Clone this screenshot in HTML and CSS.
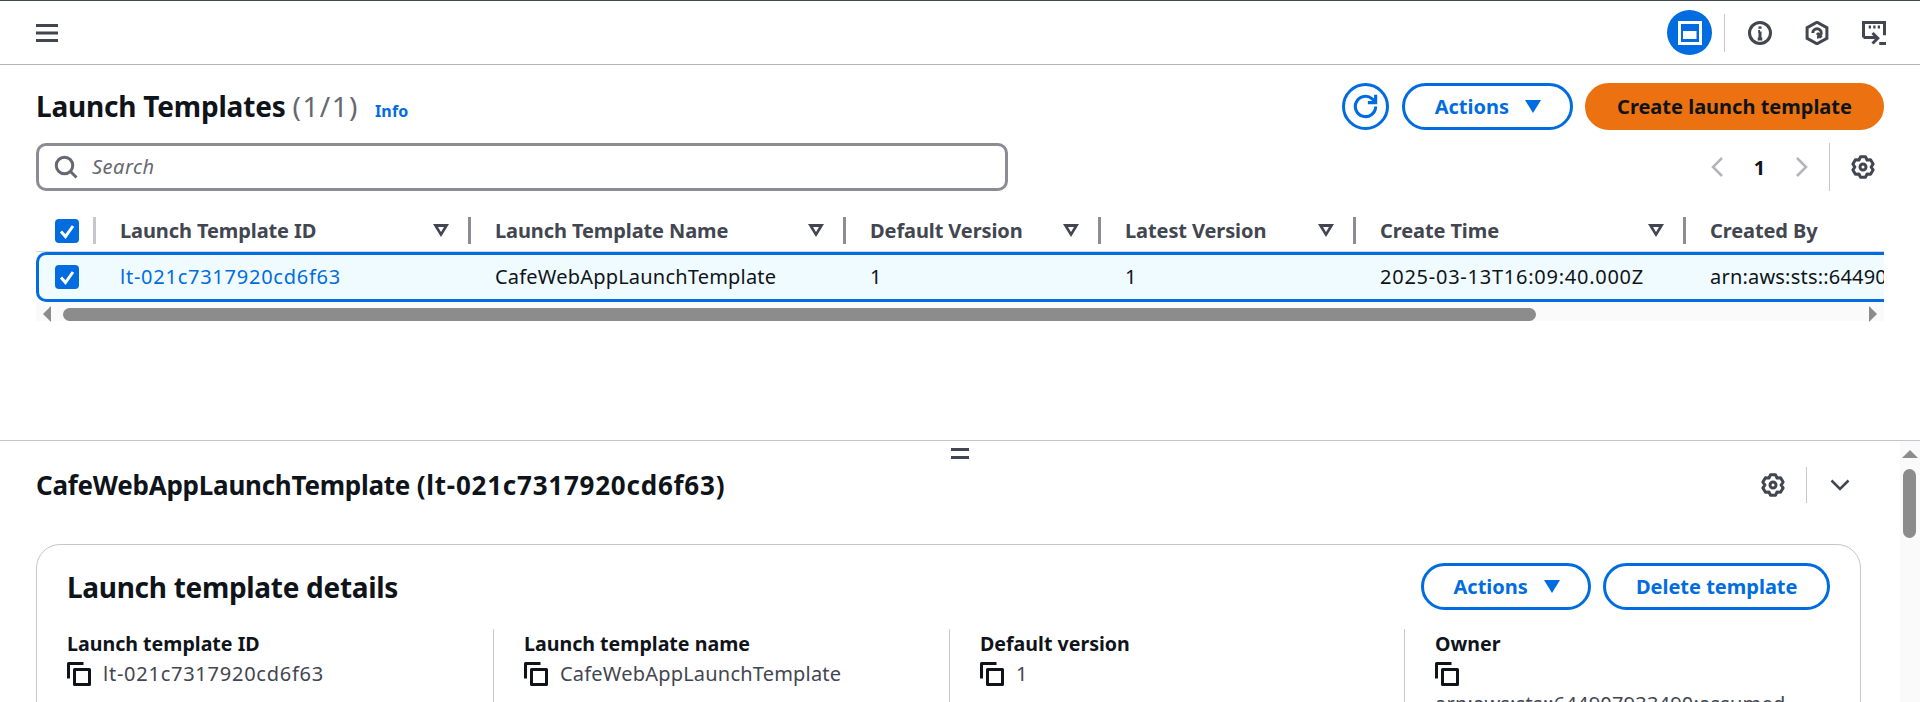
FILE: index.html
```html
<!DOCTYPE html>
<html>
<head>
	<title>Launch Templates</title>
	<link rel="stylesheet" href="styles.css">
</head>
<body>
<svg class="defs" width="0" height="0">
	<symbol id="gear" viewBox="0 0 16 16"><path d="M6.31 1.21L9.69 1.21L10.7 3.32L13.03 3.13L14.73 6.07L13.4 8L14.73 9.93L13.03 12.87L10.7 12.68L9.69 14.79L6.31 14.79L5.3 12.68L2.97 12.87L1.27 9.93L2.6 8L1.27 6.07L2.97 3.13L5.3 3.32Z"/><circle cx="8" cy="8" r="2"/></symbol>
	<symbol id="copy" viewBox="0 0 16 16"><path d="M1 11V1h10"/><rect x="5" y="5" width="10" height="10"/></symbol>
	<symbol id="check" viewBox="0 0 24 24"><path d="M6 12.5l4.5 5L18 7"/></symbol>
</svg>

<header class="topbar">
	<svg class="ico menu" viewBox="0 0 22 18"><path d="M0 1.5h22M0 9h22M0 16.5h22"/></svg>
	<div class="tools">
		<span class="tool-on"><svg viewBox="0 0 24 24"><rect x="1.5" y="1.5" width="21" height="21"/><rect class="fill" x="5" y="10" width="13.5" height="8"/></svg></span>
		<span class="tool-sep"></span>
		<svg class="ico tool" viewBox="0 0 16 16"><circle cx="8" cy="8" r="7"/><path d="M8 7v5M6.5 12h3M6.8 7H8"/><path d="M8 3.6v1.6"/></svg>
		<svg class="ico tool" viewBox="0 0 16 16"><path d="M8 .8l6.6 3.7v7L8 15.2l-6.6-3.7v-7z"/><path d="M5.2 8A2.8 2.8 0 1 1 8 10.8M8 8l3 3"/></svg>
		<svg class="ico tool" viewBox="0 0 16 16"><path d="M1 11V1h14v8.5"/><path d="M4.5 4h1.5M7.5 4h1.5M10.5 4h1.5M1 11h9M7 8l3.5 3.5L7 15M11.5 15H16"/></svg>
	</div>
</header>

<main class="upper">
	<div class="title-row">
		<h1>Launch Templates <span class="count">(1/1)</span> <a class="info">Info</a></h1>
		<div class="actions">
			<button class="btn round"><svg class="ico" viewBox="0 0 16 16"><path d="M14.5 8a6.5 6.5 0 1 1-2.2-4.9L14.5 5"/><path d="M14.5 .5v5H9.5"/></svg></button>
			<button class="btn">Actions <i class="caret"></i></button>
			<button class="btn primary">Create launch template</button>
		</div>
	</div>
	<div class="search-row">
		<div class="search">
			<svg class="ico" viewBox="0 0 16 16"><circle cx="7" cy="7" r="5.5"/><path d="M11 11l4 4"/></svg>
			<span>Search</span>
		</div>
		<div class="pager">
			<svg class="ico off" viewBox="0 0 14 24"><path d="M11 3L2 12l9 9"/></svg>
			<b>1</b>
			<svg class="ico off" viewBox="0 0 14 24"><path d="M3 3l9 9-9 9"/></svg>
			<span class="pager-sep"></span>
			<svg class="ico gear"><use href="#gear"/></svg>
		</div>
	</div>

	<div class="grid head">
		<div class="cell check-cell"><span class="box"><svg><use href="#check"/></svg></span></div>
		<div class="cell"><span>Launch Template ID</span><i class="sort"></i></div>
		<div class="cell"><span>Launch Template Name</span><i class="sort"></i></div>
		<div class="cell"><span>Default Version</span><i class="sort"></i></div>
		<div class="cell"><span>Latest Version</span><i class="sort"></i></div>
		<div class="cell"><span>Create Time</span><i class="sort"></i></div>
		<div class="cell last"><span>Created By</span></div>
	</div>
	<div class="grid row">
		<div class="cell check-cell"><span class="box"><svg><use href="#check"/></svg></span></div>
		<div class="cell"><a class="num">lt-021c7317920cd6f63</a></div>
		<div class="cell">CafeWebAppLaunchTemplate</div>
		<div class="cell">1</div>
		<div class="cell">1</div>
		<div class="cell num">2025-03-13T16:09:40.000Z</div>
		<div class="cell">arn:aws:sts::644907933490:assumed-role</div>
	</div>
	<div class="hscroll">
		<i class="arrow-l"></i>
		<div class="hthumb"></div>
		<i class="arrow-r"></i>
	</div>
</main>

<section class="lower">
	<div class="lower-main">
		<div class="handle"></div>
		<div class="split-title">
			<h2>CafeWebAppLaunchTemplate <span class="h2-id">(lt-021c7317920cd6f63)</span></h2>
			<div class="split-tools">
				<svg class="ico gear"><use href="#gear"/></svg>
				<span class="split-sep"></span>
				<svg class="ico chev" viewBox="0 0 20 12"><path d="M1.5 1.5L10 10l8.5-8.5"/></svg>
			</div>
		</div>
		<div class="card">
			<div class="card-head">
				<h3>Launch template details</h3>
				<div class="actions">
					<button class="btn">Actions <i class="caret"></i></button>
					<button class="btn">Delete template</button>
				</div>
			</div>
			<div class="fields">
				<div class="field">
					<h4>Launch template ID</h4>
					<p class="num"><svg class="ico copy"><use href="#copy"/></svg>lt-021c7317920cd6f63</p>
				</div>
				<div class="field">
					<h4>Launch template name</h4>
					<p><svg class="ico copy"><use href="#copy"/></svg>CafeWebAppLaunchTemplate</p>
				</div>
				<div class="field">
					<h4>Default version</h4>
					<p><svg class="ico copy"><use href="#copy"/></svg>1</p>
				</div>
				<div class="field">
					<h4>Owner</h4>
					<p class="stack"><svg class="ico copy"><use href="#copy"/></svg>arn:aws:sts::644907933490:assumed</p>
				</div>
			</div>
		</div>
	</div>
	<div class="vscroll">
		<i class="arrow-u"></i>
		<div class="vthumb"></div>
	</div>
</section>
</body>
</html>
```

FILE: styles.css
```css
* {
	box-sizing: border-box;
}
html, body {
	margin: 0;
	height: 702px;
	overflow: hidden;
}
body {
	background: #fff;
	color: #0f141a;
	font-family: "Noto Sans", sans-serif;
	font-size: 20px;
	letter-spacing: .2px;
	border-top: 1px solid #414750;
}
h1, h2, h3, h4, p {
	margin: 0;
}
.num {
	letter-spacing: .75px;
}
.defs {
	display: block;
	height: 0;
}
.ico {
	display: block;
	fill: none;
	stroke: #424650;
	stroke-width: 2;
}
.ico use {
	stroke-linejoin: round;
}

/* top bar */
.topbar {
	height: 64px;
	border-bottom: 1px solid #b4b4bb;
	display: flex;
	align-items: center;
	justify-content: space-between;
	padding: 0 34px 0 36px;
}
.menu {
	width: 22px;
	height: 18px;
	stroke-width: 3;
	margin-top: 1px;
}
.tools {
	display: flex;
	align-items: center;
}
.tool-on {
	width: 45px;
	height: 45px;
	border-radius: 50%;
	background: #006ce0;
	display: flex;
	align-items: center;
	justify-content: center;
}
.tool-on svg {
	width: 24px;
	height: 24px;
	fill: none;
	stroke: #fff;
	stroke-width: 3;
}
.tool-on .fill {
	fill: #fff;
	stroke: none;
}
.tool-sep {
	width: 1px;
	height: 38px;
	background: #c6c6cd;
	margin: 0 23px 0 12px;
}
.tool {
	width: 24px;
	height: 24px;
	margin-right: 33px;
}
.tool:last-child {
	margin-right: 0;
}

/* upper panel */
.upper {
	height: 376px;
	border-bottom: 1px solid #c6c6cd;
	padding-top: 18px;
}
.title-row {
	display: flex;
	justify-content: space-between;
	padding: 0 36px;
	height: 47px;
}
h1 {
	font-size: 28px;
	font-weight: 700;
	line-height: 47px;
	letter-spacing: -.2px;
}
.count {
	font-weight: 400;
	color: #656871;
	letter-spacing: 1.4px;
}
.info {
	font-size: 16px;
	color: #006ce0;
	letter-spacing: .2px;
	margin-left: 9px;
}
.actions {
	display: flex;
	gap: 12px;
}
.btn {
	height: 47px;
	padding: 0 30px;
	border: 3px solid #006ce0;
	border-radius: 24px;
	background: #fff;
	color: #006ce0;
	font-family: inherit;
	font-size: 20px;
	font-weight: 700;
	display: flex;
	align-items: center;
	justify-content: center;
}
.round {
	width: 47px;
	padding: 0;
	margin-right: 1px;
}
.round .ico {
	width: 25px;
	height: 25px;
	stroke: #006ce0;
}
.primary {
	width: 299px;
	padding: 0;
	background: #ec7211;
	border-color: #ec7211;
	color: #0f141a;
}
.caret {
	width: 0;
	height: 0;
	border-left: 8px solid transparent;
	border-right: 8px solid transparent;
	border-top: 13px solid #006ce0;
	margin: 0 -1px 0 16px;
}

.search-row {
	display: flex;
	justify-content: space-between;
	padding: 13px 45px 0 36px;
}
.search {
	width: 972px;
	height: 48px;
	border: 3px solid #8c8c94;
	border-radius: 10px;
	display: flex;
	align-items: center;
	padding-left: 15px;
	gap: 14px;
	color: #656871;
	font-style: italic;
	letter-spacing: .5px;
}
.search span {
	padding-bottom: 2px;
}
.search .ico {
	width: 24px;
	height: 24px;
	stroke: #656871;
}
.pager {
	display: flex;
	align-items: center;
}
.pager .off {
	width: 14px;
	height: 24px;
	stroke: #b4b4bb;
	stroke-width: 2.5;
}
.pager b {
	width: 69px;
	text-align: center;
	font-size: 20px;
}
.pager-sep {
	width: 1px;
	height: 48px;
	background: #c6c6cd;
	margin: 0 21px;
}
.gear {
	width: 24px;
	height: 24px;
}

/* table */
.grid {
	margin-left: 36px;
	width: 1848px;
	display: grid;
	overflow: hidden;
}
.head {
	height: 35px;
	margin-top: 26px;
	padding-bottom: 7px;
	border-bottom: 1px solid #d5d5da;
	grid-template-columns: 60px 375px 375px 255px 255px 330px 198px;
	font-size: 20px;
	letter-spacing: -.1px;
	font-weight: 700;
	color: #424650;
}
.head .cell {
	display: flex;
	align-items: center;
	justify-content: space-between;
	padding: 0 19px 0 24px;
	border-right: 3px solid #8c8c94;
	height: 27px;
	white-space: nowrap;
}
.head .last {
	border-right: 0;
}
.head .check-cell {
	padding: 0 0 0 19px;
	border-right-color: #c6c6cd;
}
.sort {
	width: 0;
	height: 0;
	border-left: 8px solid transparent;
	border-right: 8px solid transparent;
	border-top: 13px solid #424650;
	position: relative;
}
.sort::after {
	content: "";
	position: absolute;
	left: -3px;
	top: -10px;
	border-left: 3px solid transparent;
	border-right: 3px solid transparent;
	border-top: 5px solid #fff;
}
.box {
	width: 24px;
	height: 24px;
	border-radius: 4px;
	background: #006ce0;
	display: block;
}
.box svg {
	display: block;
	width: 24px;
	height: 24px;
	fill: none;
	stroke: #fff;
	stroke-width: 3;
}
.row {
	height: 50px;
	border: 3px solid #006ce0;
	border-right: 0;
	border-radius: 10px 0 0 10px;
	background: #f0fbff;
	align-items: center;
	grid-template-columns: 56px 375px 375px 255px 255px 330px 199px;
}
.row .cell {
	padding-left: 25px;
	padding-bottom: 2px;
	white-space: nowrap;
}
.row .check-cell {
	padding-left: 16px;
	padding-bottom: 0;
}
.row a {
	color: #006ce0;
}

.hscroll {
	margin-left: 36px;
	width: 1848px;
	height: 19px;
	background: #fafafa;
	display: flex;
	align-items: flex-end;
}
.hthumb {
	width: 1473px;
	height: 13px;
	border-radius: 7px;
	background: #8c8c8c;
	margin-left: 12px;
}
.arrow-l, .arrow-r {
	width: 0;
	height: 0;
	border-top: 8px solid transparent;
	border-bottom: 8px solid transparent;
	margin-bottom: -1px;
}
.arrow-l {
	margin-left: 7px;
	border-right: 8px solid #8c8c8c;
}
.arrow-r {
	margin-left: 333px;
	border-left: 8px solid #8c8c8c;
}

/* lower panel */
.lower {
	display: flex;
	height: 261px;
	overflow: hidden;
}
.lower-main {
	flex: 1;
	padding: 7px 0 0 36px;
}
.handle {
	width: 18px;
	height: 11px;
	border-top: 3px solid #424650;
	border-bottom: 3px solid #424650;
	margin-left: 915px;
}
.split-title {
	display: flex;
	justify-content: space-between;
	align-items: center;
	height: 36px;
	margin-top: 8px;
	padding-right: 50px;
}
h2 {
	font-size: 26px;
	font-weight: 700;
	letter-spacing: -.25px;
}
.h2-id {
	letter-spacing: .77px;
}
.split-tools {
	display: flex;
	align-items: center;
}
.split-sep {
	width: 1px;
	height: 36px;
	background: #c6c6cd;
	margin: 0 23px 0 21px;
}
.chev {
	width: 20px;
	height: 12px;
	stroke-width: 2.5;
}
.card {
	width: 1825px;
	height: 200px;
	margin-top: 41px;
	border: 1px solid #c6c6cd;
	border-radius: 24px;
	padding: 18px 30px 0 30px;
}
.card .btn {
	padding: 0 29.5px;
}
.card-head {
	display: flex;
	justify-content: space-between;
	align-items: center;
	height: 47px;
}
h3 {
	font-size: 28px;
	font-weight: 700;
	letter-spacing: -.3px;
}
.fields {
	display: grid;
	grid-template-columns: 426px 456px 455px 1fr;
	margin-top: 19px;
}
.field {
	border-left: 1px solid #c6c6cd;
	padding-left: 30px;
	height: 100px;
	overflow: hidden;
}
.field:first-child {
	border-left: 0;
	padding-left: 0;
}
h4 {
	font-size: 19.6px;
	font-weight: 700;
	letter-spacing: 0;
	line-height: 30px;
}
.field p {
	display: flex;
	align-items: center;
	gap: 12px;
	color: #424650;
	line-height: 30px;
	white-space: nowrap;
}
.field .stack {
	display: block;
	padding-top: 3px;
}
.copy {
	width: 24px;
	height: 24px;
	stroke: #0f141a;
	flex: none;
}
.stack .copy {
	margin-bottom: 3px;
}

.vscroll {
	width: 20px;
	background: #fafafa;
	padding: 9px 2px 0;
}
.arrow-u {
	display: block;
	width: 0;
	height: 0;
	border-left: 8px solid transparent;
	border-right: 8px solid transparent;
	border-bottom: 8px solid #8c8c8c;
}
.vthumb {
	width: 13px;
	height: 69px;
	margin: 11px 0 0 1px;
	border-radius: 7px;
	background: #8c8c8c;
}
```
